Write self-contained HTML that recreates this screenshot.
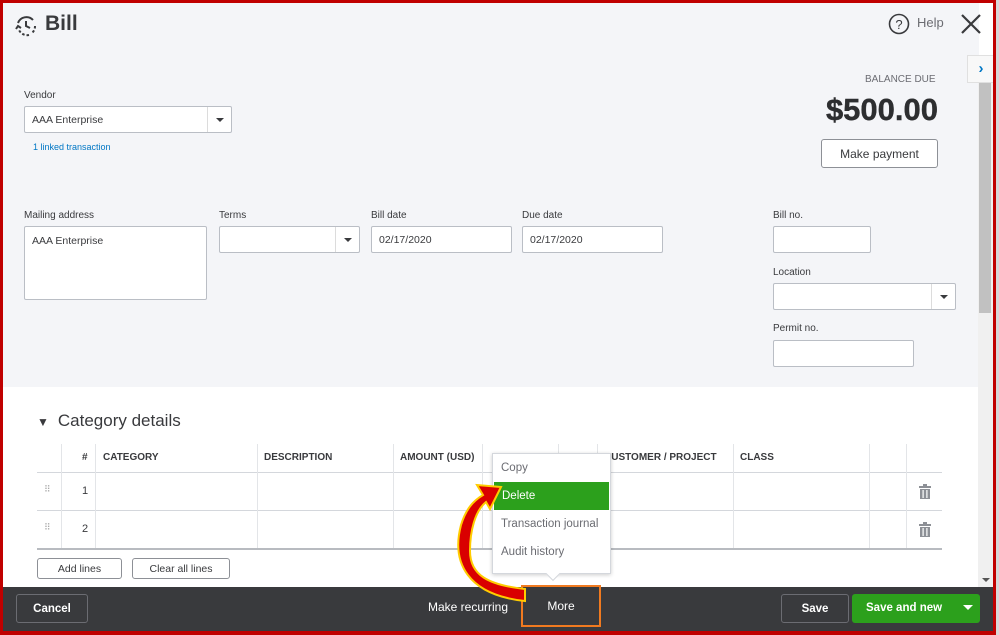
<!DOCTYPE html>
<html><head><meta charset="utf-8"><style>
*{box-sizing:border-box;margin:0;padding:0}
body{width:999px;height:635px;overflow:hidden;background:#d8d8d8;font-family:"Liberation Sans",sans-serif;color:#393a3d;position:relative}
.a{position:absolute}
.frame{left:0;top:0;width:996px;height:635px;border:3px solid #c00000;border-bottom-width:4px;background:#fff;overflow:hidden}
.top{left:0;top:0;width:976px;height:384px;background:#f4f5f8}
.lbl{font-size:10px;color:#393a3d}
.inp{background:#fff;border:1px solid #babec5;border-radius:2px;font-size:10.5px;padding:0 7px;display:flex;align-items:center}
.dd{border-left:1px solid #dcdcdc;position:absolute;right:0;top:0;bottom:0;width:24px}
.dd:after{content:"";position:absolute;left:8px;top:11px;border:4px solid transparent;border-top:4px solid #393a3d}
.th{font-size:10px;font-weight:bold;color:#393a3d;top:449px}
.vl{width:1px;background:#e3e5e8}
.hl{height:1px;background:#d4d7dc}
.btn{border:1px solid #8d9096;border-radius:3px;background:#fff;font-size:10.5px;display:flex;align-items:center;justify-content:center;color:#393a3d}
.menu div{height:28px;line-height:28px;padding-left:8px;font-size:11.5px;color:#6b6c72}
</style></head><body>
<div class="a frame">
<div class="a top"></div>
<svg class="a" style="left:11px;top:11px" width="24" height="24" viewBox="0 0 24 24" fill="none" stroke="#393a3d" stroke-width="2"><path d="M4 9a9 9 0 0 1 15-3"/><path d="M21 12a9 9 0 0 1-3 7" stroke-dasharray="2.5 2"/><path d="M15 21a9 9 0 0 1-10-5" stroke-dasharray="2.5 2"/><path d="M12 7v5l4 2"/><path d="M2 15l2-3 3 2"/></svg>
<div class="a" style="left:42px;top:9px;font-size:21px;font-weight:bold">Bill</div>
<svg class="a" style="left:885px;top:10px" width="22" height="22"><circle cx="11" cy="11" r="9.5" fill="none" stroke="#393a3d" stroke-width="1.6"/><text x="11" y="16" font-size="13" text-anchor="middle" fill="#393a3d" font-family="Liberation Sans">?</text></svg>
<div class="a" style="left:914px;top:12px;font-size:13px;color:#6b6c72">Help</div>
<svg class="a" style="left:957px;top:10px" width="22" height="22" stroke="#393a3d" stroke-width="2.2"><path d="M2 2L20 20M20 2L2 20"/></svg>
<div class="a" style="left:964px;top:52px;width:28px;height:28px;background:#f8f8f8;border:1px solid #e0e0e0;color:#0077c5;font-weight:bold;font-size:15px;text-align:center;line-height:26px">›</div>
<div class="a" style="left:975px;top:80px;width:15px;height:505px;background:#f0f0f0"></div>
<div class="a" style="left:976px;top:80px;width:12px;height:230px;background:#c1c1c1"></div>
<div class="a" style="left:979px;top:575px;border:4px solid transparent;border-top:4px solid #555"></div>

<div class="a lbl" style="left:21px;top:87px">Vendor</div>
<div class="a inp" style="left:21px;top:103px;width:208px;height:27px">AAA Enterprise<span class="dd"></span></div>
<div class="a" style="left:30px;top:139px;font-size:9px;color:#0077c5">1 linked transaction</div>

<div class="a" style="left:862px;top:71px;font-size:10px;color:#6b6c72">BALANCE DUE</div>
<div class="a" style="left:800px;top:89px;width:135px;text-align:right;font-size:31px;font-weight:bold;color:#2d2e30;-webkit-text-stroke:0.4px #2d2e30">$500.00</div>
<div class="a btn" style="left:818px;top:136px;width:117px;height:29px;font-size:12px">Make payment</div>

<div class="a lbl" style="left:21px;top:207px">Mailing address</div>
<div class="a inp" style="left:21px;top:223px;width:183px;height:74px;align-items:flex-start;padding-top:8px">AAA Enterprise</div>
<div class="a lbl" style="left:216px;top:207px">Terms</div>
<div class="a inp" style="left:216px;top:223px;width:141px;height:27px"><span class="dd"></span></div>
<div class="a lbl" style="left:368px;top:207px">Bill date</div>
<div class="a inp" style="left:368px;top:223px;width:141px;height:27px">02/17/2020</div>
<div class="a lbl" style="left:519px;top:207px">Due date</div>
<div class="a inp" style="left:519px;top:223px;width:141px;height:27px">02/17/2020</div>
<div class="a lbl" style="left:770px;top:207px">Bill no.</div>
<div class="a inp" style="left:770px;top:223px;width:98px;height:27px"></div>
<div class="a lbl" style="left:770px;top:264px">Location</div>
<div class="a inp" style="left:770px;top:280px;width:183px;height:27px"><span class="dd"></span></div>
<div class="a lbl" style="left:770px;top:320px">Permit no.</div>
<div class="a inp" style="left:770px;top:337px;width:141px;height:27px"></div>

<div class="a" style="left:34px;top:408px;font-size:17px;color:#393a3d"><span style="font-size:12px;margin-right:9px">▼</span>Category details</div>

<div class="a hl" style="left:34px;top:469px;width:905px"></div>
<div class="a hl" style="left:34px;top:507px;width:905px"></div>
<div class="a hl" style="left:34px;top:545px;width:905px;background:#b8bbc0;height:2px"></div>
<div class="a vl" style="left:58px;top:441px;height:104px"></div>
<div class="a vl" style="left:92px;top:441px;height:104px"></div>
<div class="a vl" style="left:254px;top:441px;height:104px"></div>
<div class="a vl" style="left:390px;top:441px;height:104px"></div>
<div class="a vl" style="left:479px;top:441px;height:104px"></div>
<div class="a vl" style="left:555px;top:441px;height:104px"></div>
<div class="a vl" style="left:594px;top:441px;height:104px"></div>
<div class="a vl" style="left:730px;top:441px;height:104px"></div>
<div class="a vl" style="left:866px;top:441px;height:104px"></div>
<div class="a vl" style="left:903px;top:441px;height:104px"></div>
<div class="a th" style="left:79px">#</div>
<div class="a th" style="left:100px">CATEGORY</div>
<div class="a th" style="left:261px">DESCRIPTION</div>
<div class="a th" style="left:397px">AMOUNT (USD)</div>
<div class="a th" style="left:601px">CUSTOMER / PROJECT</div>
<div class="a th" style="left:737px">CLASS</div>
<div class="a" style="left:79px;top:482px;font-size:11px">1</div>
<div class="a" style="left:79px;top:520px;font-size:11px">2</div>
<div class="a" style="left:41px;top:481px;font-size:9px;color:#aaa;letter-spacing:-1px">⠿</div>
<div class="a" style="left:41px;top:519px;font-size:9px;color:#aaa;letter-spacing:-1px">⠿</div>
<svg class="a" style="left:916px;top:481px" width="12" height="15" fill="#8d9096"><rect x="0" y="2" width="12" height="2"/><rect x="4" y="0" width="4" height="2"/><rect x="1" y="5" width="10" height="10"/><rect x="3.5" y="6" width="1.2" height="8" fill="#fff"/><rect x="7.3" y="6" width="1.2" height="8" fill="#fff"/></svg>
<svg class="a" style="left:916px;top:519px" width="12" height="15" fill="#8d9096"><rect x="0" y="2" width="12" height="2"/><rect x="4" y="0" width="4" height="2"/><rect x="1" y="5" width="10" height="10"/><rect x="3.5" y="6" width="1.2" height="8" fill="#fff"/><rect x="7.3" y="6" width="1.2" height="8" fill="#fff"/></svg>
<div class="a btn" style="left:34px;top:555px;width:85px;height:21px">Add lines</div>
<div class="a btn" style="left:129px;top:555px;width:98px;height:21px">Clear all lines</div>

<div class="a" style="left:0;top:584px;width:990px;height:44px;background:#393a3d"></div>
<div class="a btn" style="left:13px;top:591px;width:72px;height:29px;background:#393a3d;border-color:#6b6c72;color:#fff;font-weight:bold;font-size:11.5px">Cancel</div>
<div class="a" style="left:425px;top:597px;color:#fff;font-size:12px">Make recurring</div>
<div class="a" style="left:518px;top:582px;width:80px;height:42px;border:2px solid #f07a20;color:#fff;font-size:12px;text-align:center;line-height:38px">More</div>
<div class="a btn" style="left:778px;top:591px;width:68px;height:29px;background:#393a3d;border-color:#6b6c72;color:#fff;font-weight:bold;font-size:11.5px">Save</div>
<div class="a" style="left:849px;top:591px;width:128px;height:29px;background:#2ca01c;border-radius:3px;color:#fff;font-weight:bold;font-size:11.5px;line-height:29px;padding-left:14px">Save and new</div>
<div class="a" style="left:960px;top:602px;border:5px solid transparent;border-top:5px solid #fff"></div>

<div class="a menu" style="left:489px;top:450px;width:119px;height:121px;background:#fff;border:1px solid #d4d7dc;box-shadow:0 1px 4px rgba(0,0,0,.2);padding-top:0">
<div>Copy</div><div style="background:#2ca01c;color:#fff;margin:0 1px">Delete</div><div>Transaction journal</div><div>Audit history</div>
</div>
<div class="a" style="left:545px;top:566px;width:10px;height:10px;background:#fff;transform:rotate(45deg);border-right:1px solid #d4d7dc;border-bottom:1px solid #d4d7dc"></div>

<svg class="a" style="left:440px;top:470px" width="85" height="130" viewBox="0 0 85 130">
<path d="M82 128 C25 122 8 90 18 52 C23 36 30 28 40 22 L34 12 L58 14 L47 36 L43 29 C32 38 27 58 27 78 C27 102 45 112 82 116 Z" fill="#d90000" stroke="#ffcc00" stroke-width="2"/>
</svg>
</div>
</body></html>
